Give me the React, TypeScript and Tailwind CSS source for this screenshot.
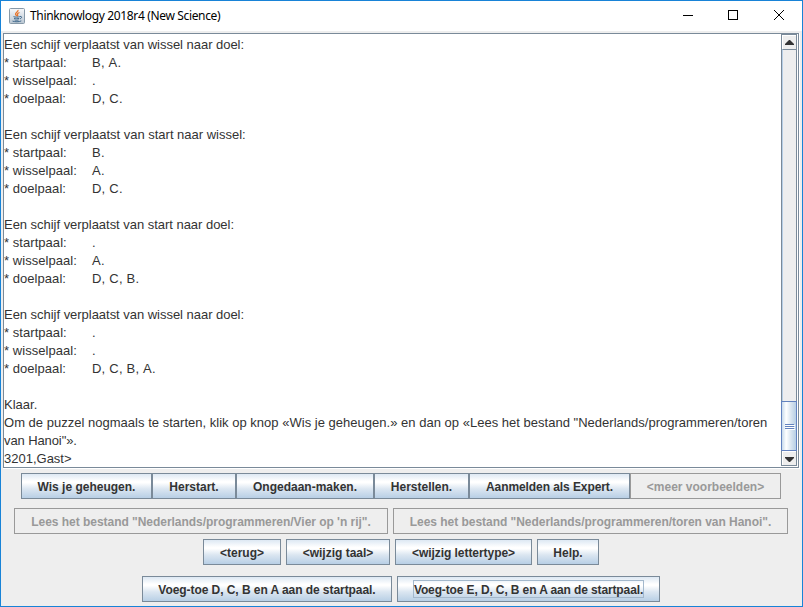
import type { ReactNode } from "react";

const FONT = "font-['Liberation_Sans',Arial,sans-serif]";

type LineData = { text?: string; value?: string; spacing?: string };

const lines: LineData[] = [
  { text: "Een schijf verplaatst van wissel naar doel:", spacing: "tracking-[-0.03px]" },
  { text: "* startpaal:", value: "B, A." },
  { text: "* wisselpaal:", value: "." },
  { text: "* doelpaal:", value: "D, C." },
  {},
  { text: "Een schijf verplaatst van start naar wissel:", spacing: "tracking-[-0.01px]" },
  { text: "* startpaal:", value: "B." },
  { text: "* wisselpaal:", value: "A." },
  { text: "* doelpaal:", value: "D, C." },
  {},
  { text: "Een schijf verplaatst van start naar doel:", spacing: "tracking-[-0.03px]" },
  { text: "* startpaal:", value: "." },
  { text: "* wisselpaal:", value: "A." },
  { text: "* doelpaal:", value: "D, C, B." },
  {},
  { text: "Een schijf verplaatst van wissel naar doel:", spacing: "tracking-[-0.03px]" },
  { text: "* startpaal:", value: "." },
  { text: "* wisselpaal:", value: "." },
  { text: "* doelpaal:", value: "D, C, B, A." },
  {},
  { text: "Klaar." },
  {
    text: "Om de puzzel nogmaals te starten, klik op knop «Wis je geheugen.» en dan op «Lees het bestand \"Nederlands/programmeren/toren",
    spacing: "tracking-[0.016px]",
  },
  { text: "van Hanoi\"».", spacing: "tracking-[-0.1px]" },
  { text: "3201,Gast>" },
];

function Line({ text, value, spacing = "" }: LineData) {
  return (
    <div className={`flex h-[18px] whitespace-pre ${spacing}`}>
      {value ? <span className="w-[88px] tracking-[0.05px]">{text}</span> : <span>{text}</span>}
      {value && <span className="tracking-[0.22px] [font-kerning:none]">{value}</span>}
    </div>
  );
}

type ButtonProps = { children: ReactNode; width: string; disabled?: boolean; focused?: boolean; spacing?: string };

function MetalButton({ children, width, disabled, focused, spacing = "" }: ButtonProps) {
  const look = disabled
    ? "border-[#999999] bg-[#eeeeee] text-[#999999]"
    : "border-[#7a8a99] bg-[linear-gradient(180deg,#dde8f3_0%,#ffffff_30%,#ffffff_36%,#dbe6f1_62%,#b8cfe5_100%)] text-[#333333]";
  return (
    <button
      disabled={disabled}
      className={`flex h-[26px] shrink-0 items-center justify-center border text-[12px] leading-[16px] font-bold whitespace-pre ${width} ${look} ${spacing}`}
    >
      {focused ? (
        <span className="flex h-[18px] w-[231px] items-center justify-center border border-[#a3b8cc] pt-[2px]">{children}</span>
      ) : (
        <span className="pt-[2px]">{children}</span>
      )}
    </button>
  );
}

function JavaIcon() {
  return (
    <svg width="16" height="16" viewBox="0 0 16 16">
      <defs>
        <linearGradient id="tile" x1="0" y1="0" x2="0" y2="1">
          <stop offset="0" stopColor="#f7f8fa" />
          <stop offset="1" stopColor="#b9c6d2" />
        </linearGradient>
      </defs>
      <rect x="0.5" y="0.5" width="15" height="15" rx="1" fill="url(#tile)" stroke="#8799a8" />
      <path d="M9 2c.5 2-3 2.600-2.400 4.400.2.700.9 1 1 1.800M10.500 4.500C8.500 5.200 8 6 8.600 6.900c.3.500.2 1-.3 1.400" fill="none" stroke="#e8742a" strokeWidth="1.3" />
      <path d="M4.500 8.600c1.500.7 4.500.7 6.300 0M5 10.300c1.500.6 3.800.6 5.300 0M5.500 11.900c1.200.5 3 .5 4.200 0M11 8.500c2-.6 2.300 1.600 0 2.300M3.500 13.100c2.500.9 6.500.9 8.800-.2" fill="none" stroke="#41698c" strokeWidth="1" />
    </svg>
  );
}

function TitleBar() {
  return (
    <header className="flex h-[30px] shrink-0 items-center bg-white pb-px pl-2">
      <JavaIcon />
      <h1 className="mt-px ml-[5px] flex-1 font-['Noto_Sans','Open_Sans',sans-serif] text-[12px] tracking-[-0.35px] text-black">
        Thinknowlogy 2018r4 (New Science)
      </h1>
      <svg className="mt-px" width="120" height="30" viewBox="682 1 120 30" fill="none" stroke="#000" shapeRendering="crispEdges">
        <path d="M683 15.500h10M728.500 10.500h9v9h-9z" />
        <path d="M774 10l10 10M784 10l-10 10" shapeRendering="auto" />
      </svg>
    </header>
  );
}

function ScrollBar() {
  return (
    <div className="w-[17px] shrink-0 border-r border-b border-white">
      <div className="flex h-full flex-col border border-[#7a8a99] bg-[#eeeeee]">
        <div className="flex h-[14px] shrink-0 items-center justify-center border-t border-l border-white">
          <svg width="9" height="5" viewBox="0 0 9 5"><path d="M4 0h1l4 4v1H0V4z" fill="#333" /></svg>
        </div>
        <div className="flex-1 border-t border-l border-t-[#7a8a99] border-l-[#b8cfe5]" />
        <div className="-mx-px flex h-[50px] shrink-0 items-center justify-center border border-[#6382bf] bg-[linear-gradient(90deg,#c8daec,#ffffff_30%,#dbe6f1_62%,#b8cfe5)] pt-[2px] pl-[2px]">
          <svg width="10" height="6" viewBox="0 0 10 6" shapeRendering="crispEdges">
            <path d="M1 1.500h9M1 3.500h9M1 5.500h9" stroke="#fff" />
            <path d="M0 .5h9M0 2.500h9M0 4.500h9" stroke="#6382bf" />
          </svg>
        </div>
        <div className="flex h-[14px] shrink-0 items-center justify-center border-t border-l border-white pt-px">
          <svg width="9" height="5" viewBox="0 0 9 5"><path d="M0 0h9v1L5 5H4L0 1z" fill="#333" /></svg>
        </div>
      </div>
    </div>
  );
}

export default function App() {
  return (
    <div className={`flex h-[607px] w-[803px] flex-col overflow-hidden border border-[#1883d7] bg-[#eeeeee] ${FONT}`}>
      <TitleBar />
      <main className="mt-[2px] mr-[2px] ml-[2px] flex h-[436px] shrink-0 border-r border-b border-white">
        <div className="flex flex-1 border border-[#7a8a99] bg-white">
          <div className="flex-1 overflow-hidden pt-[2px] text-[13px] leading-[18px] text-[#333333]">
            {lines.map((line, i) => <Line key={i} {...line} />)}
          </div>
          <ScrollBar />
        </div>
      </main>
      <footer className="flex flex-col pt-[4px]">
        <div className="flex pl-[20px]">
          <MetalButton width="w-[131px]">Wis je geheugen.</MetalButton>
          <MetalButton width="w-[84px]">Herstart.</MetalButton>
          <MetalButton width="w-[138px]">Ongedaan-maken.</MetalButton>
          <MetalButton width="w-[95px]">Herstellen.</MetalButton>
          <MetalButton width="w-[161px]" spacing="tracking-[-0.08px]">Aanmelden als Expert.</MetalButton>
          <MetalButton width="w-[151px]" disabled>{"<meer voorbeelden>"}</MetalButton>
        </div>
        <div className="mt-[9px] flex gap-[5px] pl-[13px]">
          <MetalButton width="w-[374px]" spacing="tracking-[-0.035px]" disabled>Lees het bestand "Nederlands/programmeren/Vier op 'n rij".</MetalButton>
          <MetalButton width="w-[395px]" spacing="tracking-[-0.035px]" disabled>Lees het bestand "Nederlands/programmeren/toren van Hanoi".</MetalButton>
        </div>
        <div className="mt-[5px] flex gap-[5px] pl-[202px]">
          <MetalButton width="w-[78px]">{"<terug>"}</MetalButton>
          <MetalButton width="w-[104px]">{"<wijzig taal>"}</MetalButton>
          <MetalButton width="w-[137px]" spacing="tracking-[-0.05px]">{"<wijzig lettertype>"}</MetalButton>
          <MetalButton width="w-[62px]">Help.</MetalButton>
        </div>
        <div className="mt-[11px] flex gap-[5px] pl-[141px]">
          <MetalButton width="w-[250px]" spacing="tracking-[-0.06px]">Voeg-toe D, C, B en A aan de startpaal.</MetalButton>
          <MetalButton width="w-[263px]" spacing="tracking-[-0.12px]" focused>Voeg-toe E, D, C, B en A aan de startpaal.</MetalButton>
        </div>
      </footer>
    </div>
  );
}
